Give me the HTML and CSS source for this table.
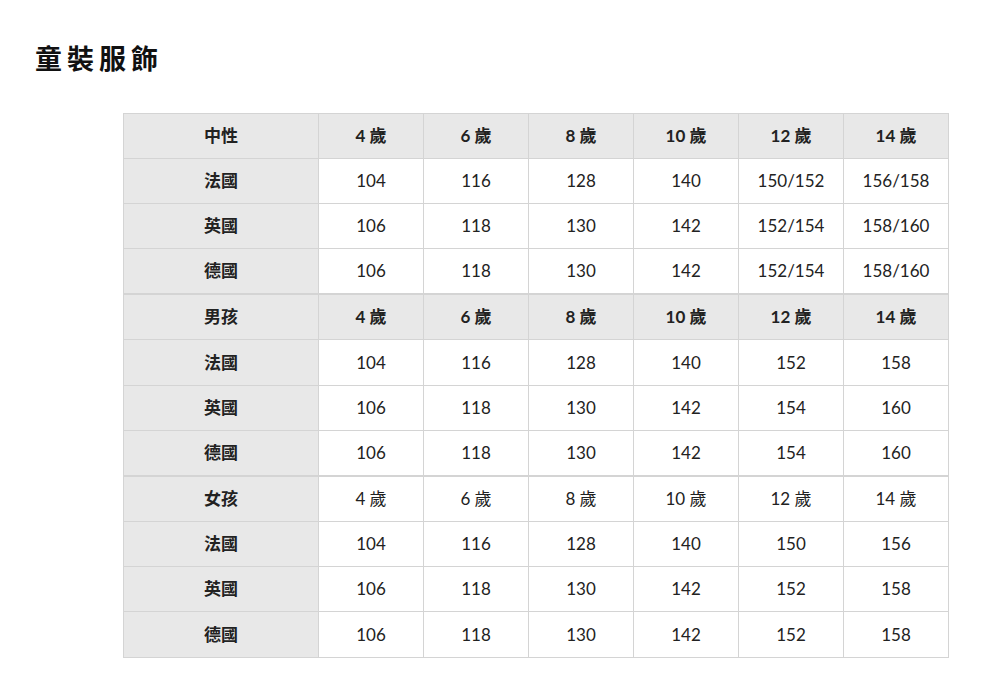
FILE: index.html
```html
<!DOCTYPE html>
<html lang="zh-Hant">
<head>
<meta charset="utf-8">
<title>童裝服飾</title>
<link rel="stylesheet" href="styles.css">
</head>
<body>
<h1 class="title">童裝服飾</h1>
<table class="size-table">
  <colgroup>
    <col class="col-label">
    <col class="col-val"><col class="col-val"><col class="col-val"><col class="col-val"><col class="col-val"><col class="col-val">
  </colgroup>
  <tbody>
    <tr class="head">
      <th>中性</th><th>4 歲</th><th>6 歲</th><th>8 歲</th><th>10 歲</th><th>12 歲</th><th>14 歲</th>
    </tr>
    <tr><th>法國</th><td>104</td><td>116</td><td>128</td><td>140</td><td>150/152</td><td>156/158</td></tr>
    <tr><th>英國</th><td>106</td><td>118</td><td>130</td><td>142</td><td>152/154</td><td>158/160</td></tr>
    <tr class="last"><th>德國</th><td>106</td><td>118</td><td>130</td><td>142</td><td>152/154</td><td>158/160</td></tr>
  </tbody>
  <tbody>
    <tr class="head">
      <th>男孩</th><th>4 歲</th><th>6 歲</th><th>8 歲</th><th>10 歲</th><th>12 歲</th><th>14 歲</th>
    </tr>
    <tr class="tall"><th>法國</th><td>104</td><td>116</td><td>128</td><td>140</td><td>152</td><td>158</td></tr>
    <tr><th>英國</th><td>106</td><td>118</td><td>130</td><td>142</td><td>154</td><td>160</td></tr>
    <tr class="last"><th>德國</th><td>106</td><td>118</td><td>130</td><td>142</td><td>154</td><td>160</td></tr>
  </tbody>
  <tbody>
    <tr class="head plain">
      <th>女孩</th><td>4 歲</td><td>6 歲</td><td>8 歲</td><td>10 歲</td><td>12 歲</td><td>14 歲</td>
    </tr>
    <tr><th>法國</th><td>104</td><td>116</td><td>128</td><td>140</td><td>150</td><td>156</td></tr>
    <tr><th>英國</th><td>106</td><td>118</td><td>130</td><td>142</td><td>152</td><td>158</td></tr>
    <tr class="tall"><th>德國</th><td>106</td><td>118</td><td>130</td><td>142</td><td>152</td><td>158</td></tr>
  </tbody>
</table>
</body>
</html>
```

FILE: styles.css
```css
html, body {
  margin: 0;
  padding: 0;
  background: #ffffff;
}

body {
  font-family: Lato, "Noto Sans CJK TC", sans-serif;
  color: #222222;
  padding: 40px 0 0 35px;
}

.title {
  margin: 0 0 37px 0;
  font-family: "Noto Sans CJK TC", sans-serif;
  font-size: 27px;
  font-weight: 700;
  letter-spacing: 5px;
  line-height: 36px;
  color: #111111;
}

.size-table {
  margin-left: 88px;
  border-collapse: collapse;
  width: 826px;
  table-layout: fixed;
  font-size: 17px;
}

.col-label { width: 195px; }
.col-val { width: 105px; }

.size-table th,
.size-table td {
  border: 1px solid #d4d4d4;
  height: 44px;
  padding: 0;
  text-align: center;
  vertical-align: middle;
  line-height: 20px;
}

.size-table tr.tall th,
.size-table tr.tall td {
  height: 45px;
}

.size-table th {
  background: #e8e8e8;
  font-weight: 700;
  font-size: 17px;
}

.size-table td {
  font-weight: 400;
  color: #222222;
}

.size-table tr.head th {
  background: #e8e8e8;
}

.size-table tr.plain td {
  background: #ffffff;
  font-weight: 400;
}

.size-table tr.last th,
.size-table tr.last td {
  border-bottom: 2px solid #d4d4d4;
}
```
